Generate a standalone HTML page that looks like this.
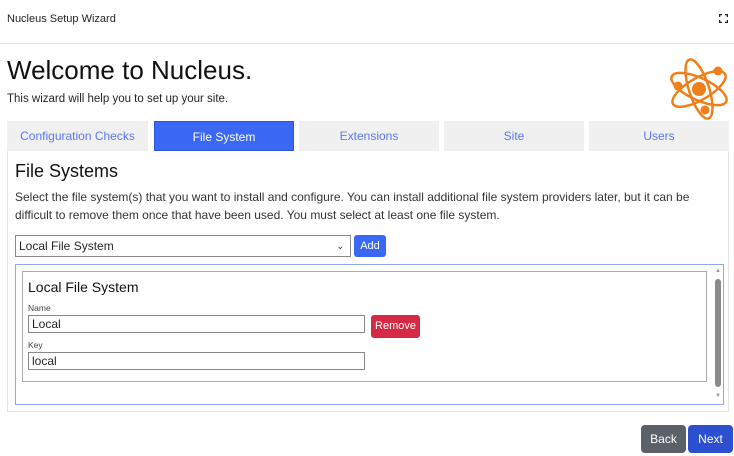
<!DOCTYPE html>
<html><head><style>
*{box-sizing:border-box;margin:0;padding:0}
body{width:734px;height:456px;overflow:hidden;background:#fff;font-family:"Liberation Sans",sans-serif;color:#212529;position:relative}
.a{position:absolute}
.tab{position:absolute;top:121px;height:30px;background:#f0f0f0;color:#5a78f0;font-size:12px;text-align:center;line-height:30px}
input,.inp{position:absolute;border:1px solid #8a8a8a;font-size:12px;padding-left:3px;background:#fff}
</style></head><body>
<div class="a" style="left:7px;top:13px;font-size:11px;">Nucleus Setup Wizard</div>
<svg class="a" style="left:719px;top:14px" width="9" height="9" viewBox="0 0 9 9" fill="none" stroke="#222" stroke-width="1.5"><path d="M0.5 3V0.5H3M6 0.5H8.5V3M8.5 6V8.5H6M3 8.5H0.5V6"/></svg>
<div class="a" style="left:0;top:43px;width:734px;height:1px;background:#e4e4e4"></div>
<div class="a" style="left:7px;top:55px;font-size:26px;color:#111">Welcome to Nucleus.</div>
<div class="a" style="left:7px;top:93px;font-size:11.5px">This wizard will help you to set up your site.</div>
<svg class="a" style="left:667px;top:54px" width="64" height="70" viewBox="0 0 64 70" fill="none" stroke="#ee7f1a" stroke-width="2.5">
<ellipse cx="32" cy="35" rx="10" ry="31" transform="rotate(-18 32 35)"/>
<ellipse cx="32" cy="35" rx="30" ry="11" transform="rotate(25 32 35)"/>
<ellipse cx="32" cy="35" rx="30" ry="11" transform="rotate(-30 32 35)"/>
<circle cx="32" cy="35" r="7" fill="#ee7f1a" stroke="none"/>
<circle cx="51" cy="17" r="4.5" fill="#ee7f1a" stroke="none"/>
<circle cx="11" cy="32" r="4.5" fill="#ee7f1a" stroke="none"/>
<circle cx="38" cy="56" r="4.5" fill="#ee7f1a" stroke="none"/>
</svg>
<div class="tab" style="left:7px;width:141px">Configuration Checks</div>
<div class="tab" style="left:154px;width:140px;background:#3a68f5;color:#fff;border:1px solid #2a58e0">File System</div>
<div class="tab" style="left:299px;width:140px">Extensions</div>
<div class="tab" style="left:444px;width:140px">Site</div>
<div class="tab" style="left:589px;width:140px">Users</div>
<div class="a" style="left:7px;top:151px;width:722px;height:261px;border:1px solid #e2e2e2;border-top:none"></div>
<div class="a" style="left:15px;top:161px;font-size:18px;color:#111">File Systems</div>
<div class="a" style="left:15px;top:189px;width:700px;font-size:12px;line-height:17.5px;color:#333">Select the file system(s) that you want to install and configure. You can install additional file system providers later, but it can be difficult to remove them once that have been used. You must select at least one file system.</div>
<div class="inp" style="left:15px;top:235px;width:336px;height:22px;line-height:20px">Local File System<span style="position:absolute;right:6px;top:0;font-size:9px">&#8964;</span></div>
<div class="a" style="left:354px;top:235px;width:32px;height:22px;background:#3a68f5;color:#fff;font-size:11px;border-radius:3px;text-align:center;line-height:22px">Add</div>
<div class="a" style="left:15px;top:264px;width:709px;height:141px;border:1px solid #8fa4f5"></div>
<div class="a" style="left:22px;top:271px;width:685px;height:111px;border:1px solid #aaa"></div>
<div class="a" style="left:28px;top:279px;font-size:14px;color:#111">Local File System</div>
<div class="a" style="left:28px;top:303px;font-size:8.5px;color:#444">Name</div>
<div class="inp" style="left:28px;top:315px;width:337px;height:18px;line-height:16px">Local</div>
<div class="a" style="left:371px;top:315px;width:49px;height:23px;background:#d42a45;color:#fff;font-size:11px;border-radius:3px;text-align:center;line-height:23px">Remove</div>
<div class="a" style="left:28px;top:340px;font-size:8.5px;color:#444">Key</div>
<div class="inp" style="left:28px;top:352px;width:337px;height:18px;line-height:16px">local</div>
<div class="a" style="left:715px;top:279px;width:6px;height:108px;background:#8a8a8a;border-radius:3px"></div>
<div class="a" style="left:715px;top:268px;font-size:6px;color:#999">&#9650;</div>
<div class="a" style="left:715px;top:393px;font-size:6px;color:#999">&#9660;</div>
<div class="a" style="left:641px;top:425px;width:45px;height:28px;background:#5b6168;color:#fff;font-size:12px;border-radius:4px;text-align:center;line-height:28px">Back</div>
<div class="a" style="left:688px;top:425px;width:45px;height:28px;background:#2c4fd0;color:#fff;font-size:12px;border-radius:4px;text-align:center;line-height:28px">Next</div>
</body></html>
